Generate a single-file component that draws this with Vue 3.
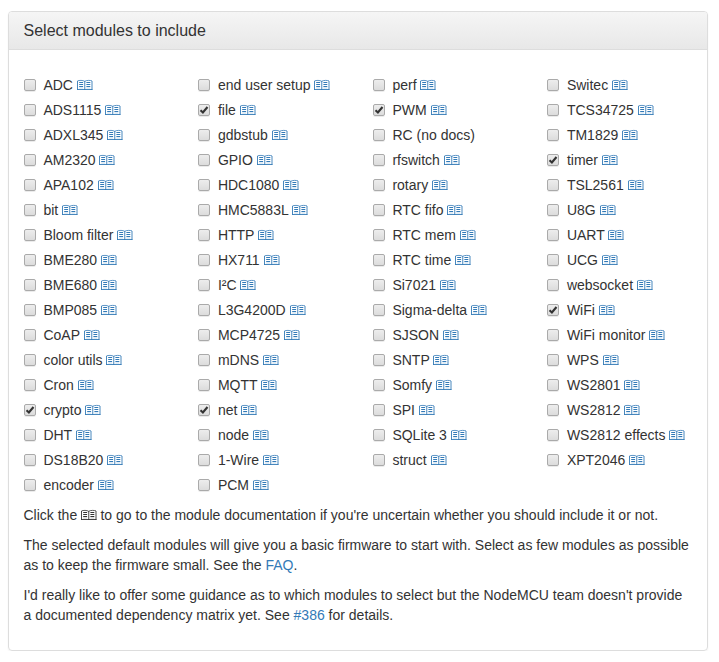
<script setup>
import { reactive } from 'vue'

const checked = ['crypto', 'file', 'net', 'PWM', 'timer', 'WiFi']
const undocumented = ['RC (no docs)']

const toModules = (names) =>
  names.map((name) => ({
    name,
    selected: checked.includes(name),
    documented: !undocumented.includes(name),
  }))

const columns = reactive([
  toModules(['ADC', 'ADS1115', 'ADXL345', 'AM2320', 'APA102', 'bit', 'Bloom filter', 'BME280', 'BME680', 'BMP085', 'CoAP', 'color utils', 'Cron', 'crypto', 'DHT', 'DS18B20', 'encoder']),
  toModules(['end user setup', 'file', 'gdbstub', 'GPIO', 'HDC1080', 'HMC5883L', 'HTTP', 'HX711', 'I²C', 'L3G4200D', 'MCP4725', 'mDNS', 'MQTT', 'net', 'node', '1-Wire', 'PCM']),
  toModules(['perf', 'PWM', 'RC (no docs)', 'rfswitch', 'rotary', 'RTC fifo', 'RTC mem', 'RTC time', 'Si7021', 'Sigma-delta', 'SJSON', 'SNTP', 'Somfy', 'SPI', 'SQLite 3', 'struct']),
  toModules(['Switec', 'TCS34725', 'TM1829', 'timer', 'TSL2561', 'U8G', 'UART', 'UCG', 'websocket', 'WiFi', 'WiFi monitor', 'WPS', 'WS2801', 'WS2812', 'WS2812 effects', 'XPT2046']),
])
</script>

<template>
  <svg class="defs" width="0" height="0" aria-hidden="true">
    <symbol id="book" viewBox="0 0 16 11" overflow="visible">
      <g fill="none" stroke="currentColor">
        <path d="M.5 10V1M15 10V1M7.75 1V10" stroke-width=".9" />
        <path d="M.5 .9Q1.8 .4 4 .4T7.75 1.3Q9 .4 11.5 .4T15 .9" stroke-width=".8" />
        <path d="M.1 9.5H15.4" stroke-width=".9" />
        <path d="M2.2 2.5H6.1M2.2 4.5H6.1M2.2 6.5H6.1M9.4 2.5H13.3M9.4 4.5H13.3M9.4 6.5H13.3" stroke-width="1" />
        <path d="M2.2 8H6.1M9.4 8H13.3" stroke-width=".3" />
      </g>
    </symbol>
  </svg>
  <section class="panel">
    <header class="heading"><h3>Select modules to include</h3></header>
    <div class="body">
      <div class="grid">
        <div v-for="(column, index) in columns" :key="index" class="column">
          <label v-for="module in column" :key="module.name" class="module">
            <input v-model="module.selected" class="native" type="checkbox" />
            <span class="box">
              <svg v-if="module.selected" viewBox="0 0 10 10"><path d="M1.5 5.2L3.9 7.4L8.5 2" /></svg>
            </span>
            <span>{{ module.name }}
              <a v-if="module.documented" href="#"><svg class="book"><use href="#book" /></svg></a>
            </span>
          </label>
        </div>
      </div>
      <p>Click the <svg class="book"><use href="#book" /></svg> to go to the module documentation if you're uncertain whether you should include it or not.</p>
      <p>The selected default modules will give you a basic firmware to start with. Select as few modules as possible as to keep the firmware small. See the <a href="#">FAQ</a>.</p>
      <p>I'd really like to offer some guidance as to which modules to select but the NodeMCU team doesn't provide a documented dependency matrix yet. See <a href="#">#386</a> for details.</p>
    </div>
  </section>
</template>

<style>
body {
  background: #fff;
}
</style>

<style scoped>
.defs {
  display: block;
}

.panel {
  box-sizing: border-box;
  width: 700px;
  height: 640px;
  margin: 11px 0 0 8px;
  border: 1px solid #ddd;
  border-radius: 4px;
  box-shadow: 0 1px 2px rgba(0, 0, 0, 0.05);
  color: #333;
  font: 14px/20px "Liberation Sans", Arial, sans-serif;
}

.heading {
  padding: 10px 14.5px;
  border-bottom: 1px solid #ddd;
  border-radius: 3px 3px 0 0;
  background: linear-gradient(#f5f5f5, #e8e8e8);
}

h3 {
  margin: 0;
  font-size: 16px;
  font-weight: 400;
  line-height: 17px;
}

.body {
  padding: 15px 15px 15px 14.5px;
}

.grid {
  display: grid;
  grid-template-columns: repeat(4, 174.5px);
  margin: 10px -15px 10px -14.5px;
}

.column {
  display: flex;
  flex-direction: column;
  gap: 5px;
  padding-left: 14.8px;
}

.module {
  display: flex;
  align-items: flex-start;
  gap: 7.6px;
  height: 20px;
  white-space: nowrap;
}

.native {
  position: absolute;
  opacity: 0;
  pointer-events: none;
}

.box {
  box-sizing: border-box;
  width: 12px;
  height: 12px;
  margin-top: 4px;
  border: 1px solid #aaa;
  border-radius: 2px;
  background: linear-gradient(#ededed, #dcdcdc);
  box-shadow: 0 1px 0 rgba(0, 0, 0, 0.08);
}

.box svg {
  display: block;
  width: 10px;
  height: 10px;
  fill: none;
  stroke: #333;
  stroke-width: 2.1;
}

.book {
  width: 16px;
  height: 11px;
  margin-right: -0.5px;
  overflow: visible;
  vertical-align: -1px;
}

a {
  color: #337ab7;
  text-decoration: none;
}

p {
  margin: 0 0 10px;
}
</style>
